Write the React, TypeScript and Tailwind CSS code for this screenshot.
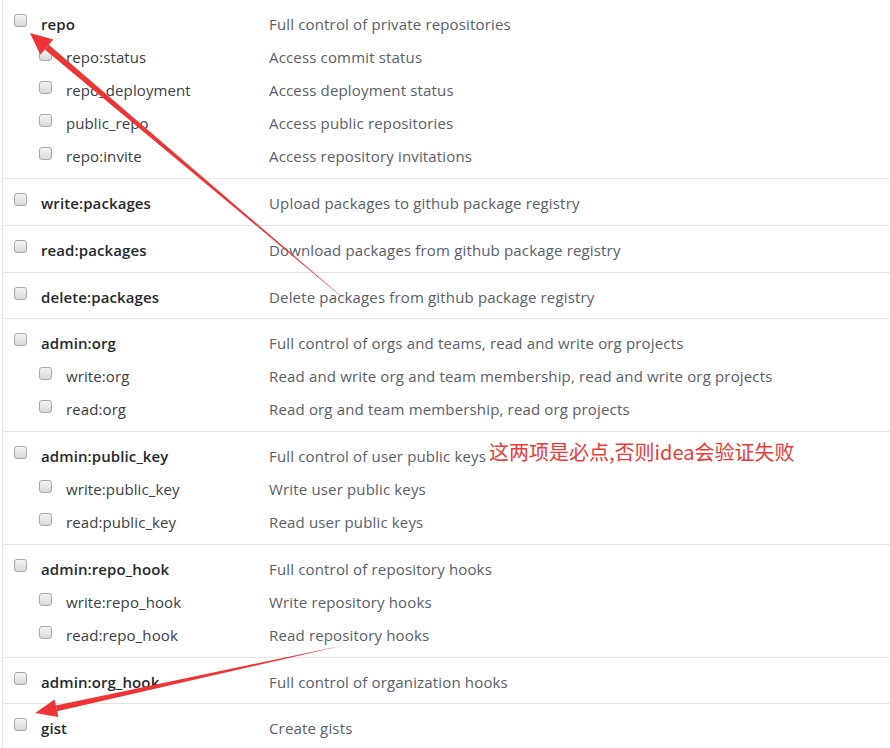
import React from 'react'

type Scope = { name: string; desc: string; tight?: boolean; subs?: { name: string; desc: string }[] }

const scopes: Scope[] = [
  {
    name: "repo",
    desc: "Full control of private repositories",
    subs: [
      { name: "repo:status", desc: "Access commit status" },
      { name: "repo_deployment", desc: "Access deployment status" },
      { name: "public_repo", desc: "Access public repositories" },
      { name: "repo:invite", desc: "Access repository invitations" },
    ],
  },
  { name: "write:packages", desc: "Upload packages to github package registry" },
  { name: "read:packages", desc: "Download packages from github package registry" },
  { name: "delete:packages", desc: "Delete packages from github package registry", tight: true },
  {
    name: "admin:org",
    desc: "Full control of orgs and teams, read and write org projects",
    subs: [
      { name: "write:org", desc: "Read and write org and team membership, read and write org projects" },
      { name: "read:org", desc: "Read org and team membership, read org projects" },
    ],
  },
  {
    name: "admin:public_key",
    desc: "Full control of user public keys",
    subs: [
      { name: "write:public_key", desc: "Write user public keys" },
      { name: "read:public_key", desc: "Read user public keys" },
    ],
  },
  {
    name: "admin:repo_hook",
    desc: "Full control of repository hooks",
    subs: [
      { name: "write:repo_hook", desc: "Write repository hooks" },
      { name: "read:repo_hook", desc: "Read repository hooks" },
    ],
  },
  { name: "admin:org_hook", desc: "Full control of organization hooks", tight: true },
  { name: "gist", desc: "Create gists" },
]

function Box({ className }: { className: string }) {
  return (
    <span
      className={`block w-[13px] h-[13px] shrink-0 rounded-[3px] border border-[#a9a9a9] bg-gradient-to-b from-[#f4f4f4] to-[#d9d9d9] ${className}`}
    />
  )
}

export default function App() {
  return (
    <div
      className="relative w-[890px] h-[748px] overflow-hidden bg-white text-[15px]"
      style={{ fontFamily: '"Open Sans", "Noto Sans", sans-serif' }}
    >
      <div className="ml-[2px] border-l border-[#e6e6e6] h-full">
        {scopes.map((s) => (
          <div
            key={s.name}
            className={`pt-2 border-b border-[#e4e4e4] ${s.tight ? "pb-[4px]" : "pb-[5px]"}`}
          >
            <div className="flex h-[33px] leading-[33px]">
              <Box className="ml-[11px] mt-[6px]" />
              <span className="ml-[14px] w-[228px] font-semibold text-[#24292e] tracking-[0.1px]">{s.name}</span>
              <span className="text-[#586069] tracking-[0.16px]">{s.desc}</span>
            </div>
            {s.subs?.map((c) => (
              <div key={c.name} className="flex h-[33px] leading-[33px]">
                <Box className="ml-[36px] mt-[7px]" />
                <span className="ml-[14px] w-[203px] text-[#3b4046] tracking-[0.1px]">{c.name}</span>
                <span className="text-[#586069] tracking-[0.16px]">{c.desc}</span>
              </div>
            ))}
          </div>
        ))}
      </div>

      <span
        className="absolute left-[489px] top-[437px] text-[20px] leading-[30px] text-[#ea3b3b]"
        style={{ fontFamily: '"Noto Sans CJK SC", "Open Sans", sans-serif' }}
      >
        这两项是必点,否则idea会验证失败
      </span>

      <svg className="absolute inset-0 pointer-events-none" width="890" height="748">
        <polygon points="355,308 44.8,49.6 48.8,44.8" fill="#ee3535" />
        <polygon points="30,33 53.3,39.6 40.3,54.8" fill="#ee3535" />
        <polygon points="345,645 55.9,705.4 57.1,711.2" fill="#ee3535" />
        <polygon points="35,713 58.4,717.1 54.6,699.5" fill="#ee3535" />
      </svg>
    </div>
  )
}
